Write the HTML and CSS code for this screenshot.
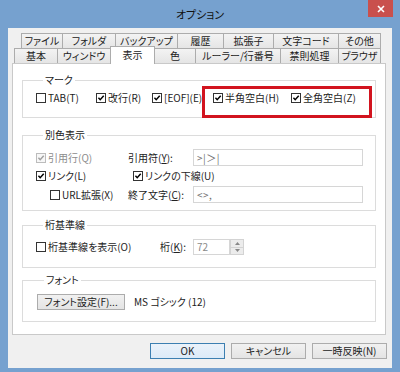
FILE: index.html
```html
<!DOCTYPE html>
<html lang="ja">
<head>
<meta charset="utf-8">
<title>オプション</title>
<link rel="stylesheet" href="styles.css">
</head>
<body>
<div class="window">
  <div class="titlebar">
    <div class="title">オプション</div>
    <div class="close"><svg width="8" height="8" viewBox="0 0 8 8"><path d="M1 1L7 7M7 1L1 7" stroke="#fff" stroke-width="1.6"/></svg></div>
  </div>
  <div class="client">
    <div class="tabs">
      <div class="tabrow row1">
        <div class="tab">ファイル</div>
        <div class="tab">フォルダ</div>
        <div class="tab">バックアップ</div>
        <div class="tab">履歴</div>
        <div class="tab">拡張子</div>
        <div class="tab">文字コード</div>
        <div class="tab">その他</div>
      </div>
      <div class="tabrow row2">
        <div class="tab">基本</div>
        <div class="tab">ウィンドウ</div>
        <div class="tab sel">表示</div>
        <div class="tab">色</div>
        <div class="tab">ルーラー/行番号</div>
        <div class="tab">禁則処理</div>
        <div class="tab">ブラウザ</div>
      </div>
    </div>
    <div class="panel">
      <fieldset class="fs-mark">
        <legend>マーク</legend>
        <div class="mark-row">
          <label class="chk"><span class="box"></span>TAB(T)</label>
          <label class="chk"><span class="box"><svg viewBox="0 0 10 10"><path d="M1.8 4.8L4 7.2L8.4 2.2" fill="none" stroke="#000" stroke-width="1.8"/></svg></span>改行(R)</label>
          <label class="chk"><span class="box"><svg viewBox="0 0 10 10"><path d="M1.8 4.8L4 7.2L8.4 2.2" fill="none" stroke="#000" stroke-width="1.8"/></svg></span>[EOF](E)</label>
          <label class="chk"><span class="box"><svg viewBox="0 0 10 10"><path d="M1.8 4.8L4 7.2L8.4 2.2" fill="none" stroke="#000" stroke-width="1.8"/></svg></span>半角空白(H)</label>
          <label class="chk"><span class="box"><svg viewBox="0 0 10 10"><path d="M1.8 4.8L4 7.2L8.4 2.2" fill="none" stroke="#000" stroke-width="1.8"/></svg></span>全角空白(Z)</label>
        </div>
      </fieldset>
      <fieldset class="fs-color">
        <legend>別色表示</legend>
        <div class="color-grid">
          <label class="chk disabled"><span class="box"><svg viewBox="0 0 10 10"><path d="M1.8 4.8L4 7.2L8.4 2.2" fill="none" stroke="#a0a0a0" stroke-width="1.8"/></svg></span>引用行(Q)</label>
          <span class="lbl">引用符(<u>Y</u>):</span>
          <div class="textbox">&gt;|＞|</div>
          <label class="chk"><span class="box"><svg viewBox="0 0 10 10"><path d="M1.8 4.8L4 7.2L8.4 2.2" fill="none" stroke="#000" stroke-width="1.8"/></svg></span>リンク(L)</label>
          <label class="chk span2"><span class="box"><svg viewBox="0 0 10 10"><path d="M1.8 4.8L4 7.2L8.4 2.2" fill="none" stroke="#000" stroke-width="1.8"/></svg></span>リンクの下線(U)</label>
          <label class="chk indent"><span class="box"></span>URL拡張(X)</label>
          <span class="lbl">終了文字(<u>C</u>):</span>
          <div class="textbox">&lt;&gt;,</div>
        </div>
      </fieldset>
      <fieldset class="fs-ruler">
        <legend>桁基準線</legend>
        <div class="ruler-row">
          <label class="chk ruler-chk"><span class="box"></span>桁基準線を表示(O)</label>
          <span class="lbl ruler-lbl">桁(<u>K</u>):</span>
          <div class="spin-input">72</div>
          <div class="spin">
            <span class="spin-btn"><svg width="5" height="3" viewBox="0 0 5 3"><path d="M0 3L2.5 0L5 3Z" fill="#888"/></svg></span>
            <span class="spin-btn"><svg width="5" height="3" viewBox="0 0 5 3"><path d="M0 0L2.5 3L5 0Z" fill="#888"/></svg></span>
          </div>
        </div>
      </fieldset>
      <fieldset class="fs-font">
        <legend>フォント</legend>
        <div class="font-row">
          <div class="btn font-btn">フォント設定(F)...</div>
          <span class="font-name">MS ゴシック (12)</span>
        </div>
      </fieldset>
      <div class="highlight"></div>
    </div>
    <div class="buttons">
      <div class="btn default">OK</div>
      <div class="btn">キャンセル</div>
      <div class="btn">一時反映(N)</div>
    </div>
  </div>
</div>
</body>
</html>
```
FILE: styles.css
```css
* { box-sizing: border-box; }
html, body { margin: 0; padding: 0; }
body {
  width: 400px;
  height: 372px;
  overflow: hidden;
  background: #719ecd;
  font-family: "Noto Sans CJK JP", "Noto Sans", sans-serif;
  font-size: 10px;
  line-height: 12px;
  color: #1e1e1e;
  font-feature-settings: "palt";
}
.window {
  width: 400px;
  height: 372px;
  display: flex;
  flex-direction: column;
  background: #76a1cf;
}
.titlebar {
  height: 28px;
  display: grid;
  grid-template-columns: 1fr auto 1fr;
  align-items: start;
}
.title {
  grid-column: 2;
  font-size: 11px;
  line-height: 14px;
  margin-top: 7px;
  color: #111;
}
.close {
  grid-column: 3;
  justify-self: end;
  width: 25px;
  height: 17px;
  margin-right: 7px;
  background: #c9504d;
  display: flex;
  align-items: center;
  justify-content: center;
}
.client {
  margin: 0 8px;
  height: 340px;
  background: #f0f0f0;
}
.tabs { padding-top: 5px; }
.tabrow { display: flex; height: 15px; }
.row1 { margin-left: 13px; }
.row2 { margin-left: 6px; align-items: flex-end; }
.tab {
  height: 15px;
  border: 1px solid #acacac;
  border-bottom: none;
  margin-right: -1px;
  background: linear-gradient(#f3f3f3, #e5e5e5);
  text-align: center;
  line-height: 13px;
  white-space: nowrap;
  color: #222;
}
.row1 .tab:nth-child(1) { width: 42px; }
.row1 .tab:nth-child(2) { width: 54px; }
.row1 .tab:nth-child(3) { width: 63px; }
.row1 .tab:nth-child(4) { width: 47px; }
.row1 .tab:nth-child(5) { width: 51px; }
.row1 .tab:nth-child(6) { width: 66px; }
.row1 .tab:nth-child(7) { width: 43px; }
.row2 .tab:nth-child(1) { width: 44px; }
.row2 .tab:nth-child(2) { width: 54px; }
.row2 .tab:nth-child(3) { width: 45px; }
.row2 .tab:nth-child(4) { width: 42px; }
.row2 .tab:nth-child(5) { width: 86px; }
.row2 .tab:nth-child(6) { width: 59px; }
.row2 .tab:nth-child(7) { width: 43px; }
.tab.sel {
  height: 18px;
  margin-bottom: -1px;
  background: #fff;
  position: relative;
  z-index: 1;
  line-height: 15px;
}
.panel {
  margin-left: 4px;
  width: 374px;
  height: 272px;
  background: #fff;
  border: 1px solid #c9c9c9;
  position: relative;
}
fieldset {
  margin: 0 9px;
  padding: 0;
  border: 1px solid #dcdcdc;
  min-width: 0;
}
legend {
  padding: 0 2px;
  margin-left: 7px;
  line-height: 12px;
  color: #222;
}
.fs-mark { margin-top: 10px; padding: 6px 0 13px 13px; }
.fs-color { margin-top: 11px; padding: 8px 0 7px 13px; }
.fs-ruler { margin-top: 8px; padding: 8px 0 12px 13px; }
.fs-font { margin-top: 6px; padding: 8px 0 11px 14px; }

.chk {
  display: flex;
  align-items: center;
  gap: 2px;
  white-space: nowrap;
}
.box {
  width: 10px;
  height: 10px;
  border: 1px solid #333;
  background: #fff;
  display: flex;
  flex: none;
}
.box svg { width: 8px; height: 8px; }
.chk.disabled { color: #8c8c8c; }
.chk.disabled .box { border-color: #bcbcbc; background: #f7f7f7; }

.mark-row {
  display: grid;
  grid-template-columns: 60px 56px 61px 78px auto;
  height: 12px;
  align-items: center;
}
.color-grid {
  display: grid;
  grid-template-columns: 92px 65px 170px;
  grid-template-rows: 17px 12px 17px;
  row-gap: 4px;
  align-items: center;
}
.span2 { grid-column: 2 / 4; margin-left: 5px; }
.indent { margin-left: 14px; }
.lbl { white-space: nowrap; color: #222; }
.textbox {
  height: 17px;
  border: 1px solid #d6d6d6;
  background: #fff;
  color: #6e6e6e;
  padding-left: 3px;
  line-height: 15px;
  letter-spacing: 0.5px;
}
.ruler-row {
  display: flex;
  align-items: center;
  height: 16px;
}
.ruler-chk { width: 124px; }
.ruler-lbl { width: 33px; }
.spin-input {
  width: 37px;
  height: 16px;
  border: 1px solid #d6d6d6;
  color: #8a8a8a;
  padding-left: 3px;
  line-height: 14px;
}
.spin {
  width: 14px;
  height: 16px;
  display: flex;
  flex-direction: column;
}
.spin-btn {
  flex: 1;
  background: #ececec;
  border: 1px solid #d3d3d3;
  display: flex;
  align-items: center;
  justify-content: center;
}
.spin-btn + .spin-btn { border-top: none; }
.font-row {
  display: flex;
  align-items: center;
  height: 16px;
}
.btn {
  height: 16px;
  border: 1px solid #acacac;
  background: linear-gradient(#f1f1f1, #e4e4e4);
  text-align: center;
  line-height: 14px;
  white-space: nowrap;
  color: #222;
}
.font-btn { width: 88px; }
.font-name { margin-left: 9px; color: #222; }
.highlight {
  position: absolute;
  left: 189px;
  top: 22px;
  width: 170px;
  height: 32px;
  border: 3px solid #d2141f;
}
.buttons {
  display: flex;
  justify-content: flex-end;
  gap: 6px;
  padding-right: 5px;
  margin-top: 8px;
}
.buttons .btn { width: 75px; }
.btn.default { border-color: #3c7fb1; background: linear-gradient(#eaf2fa, #dcebf8); }
```
